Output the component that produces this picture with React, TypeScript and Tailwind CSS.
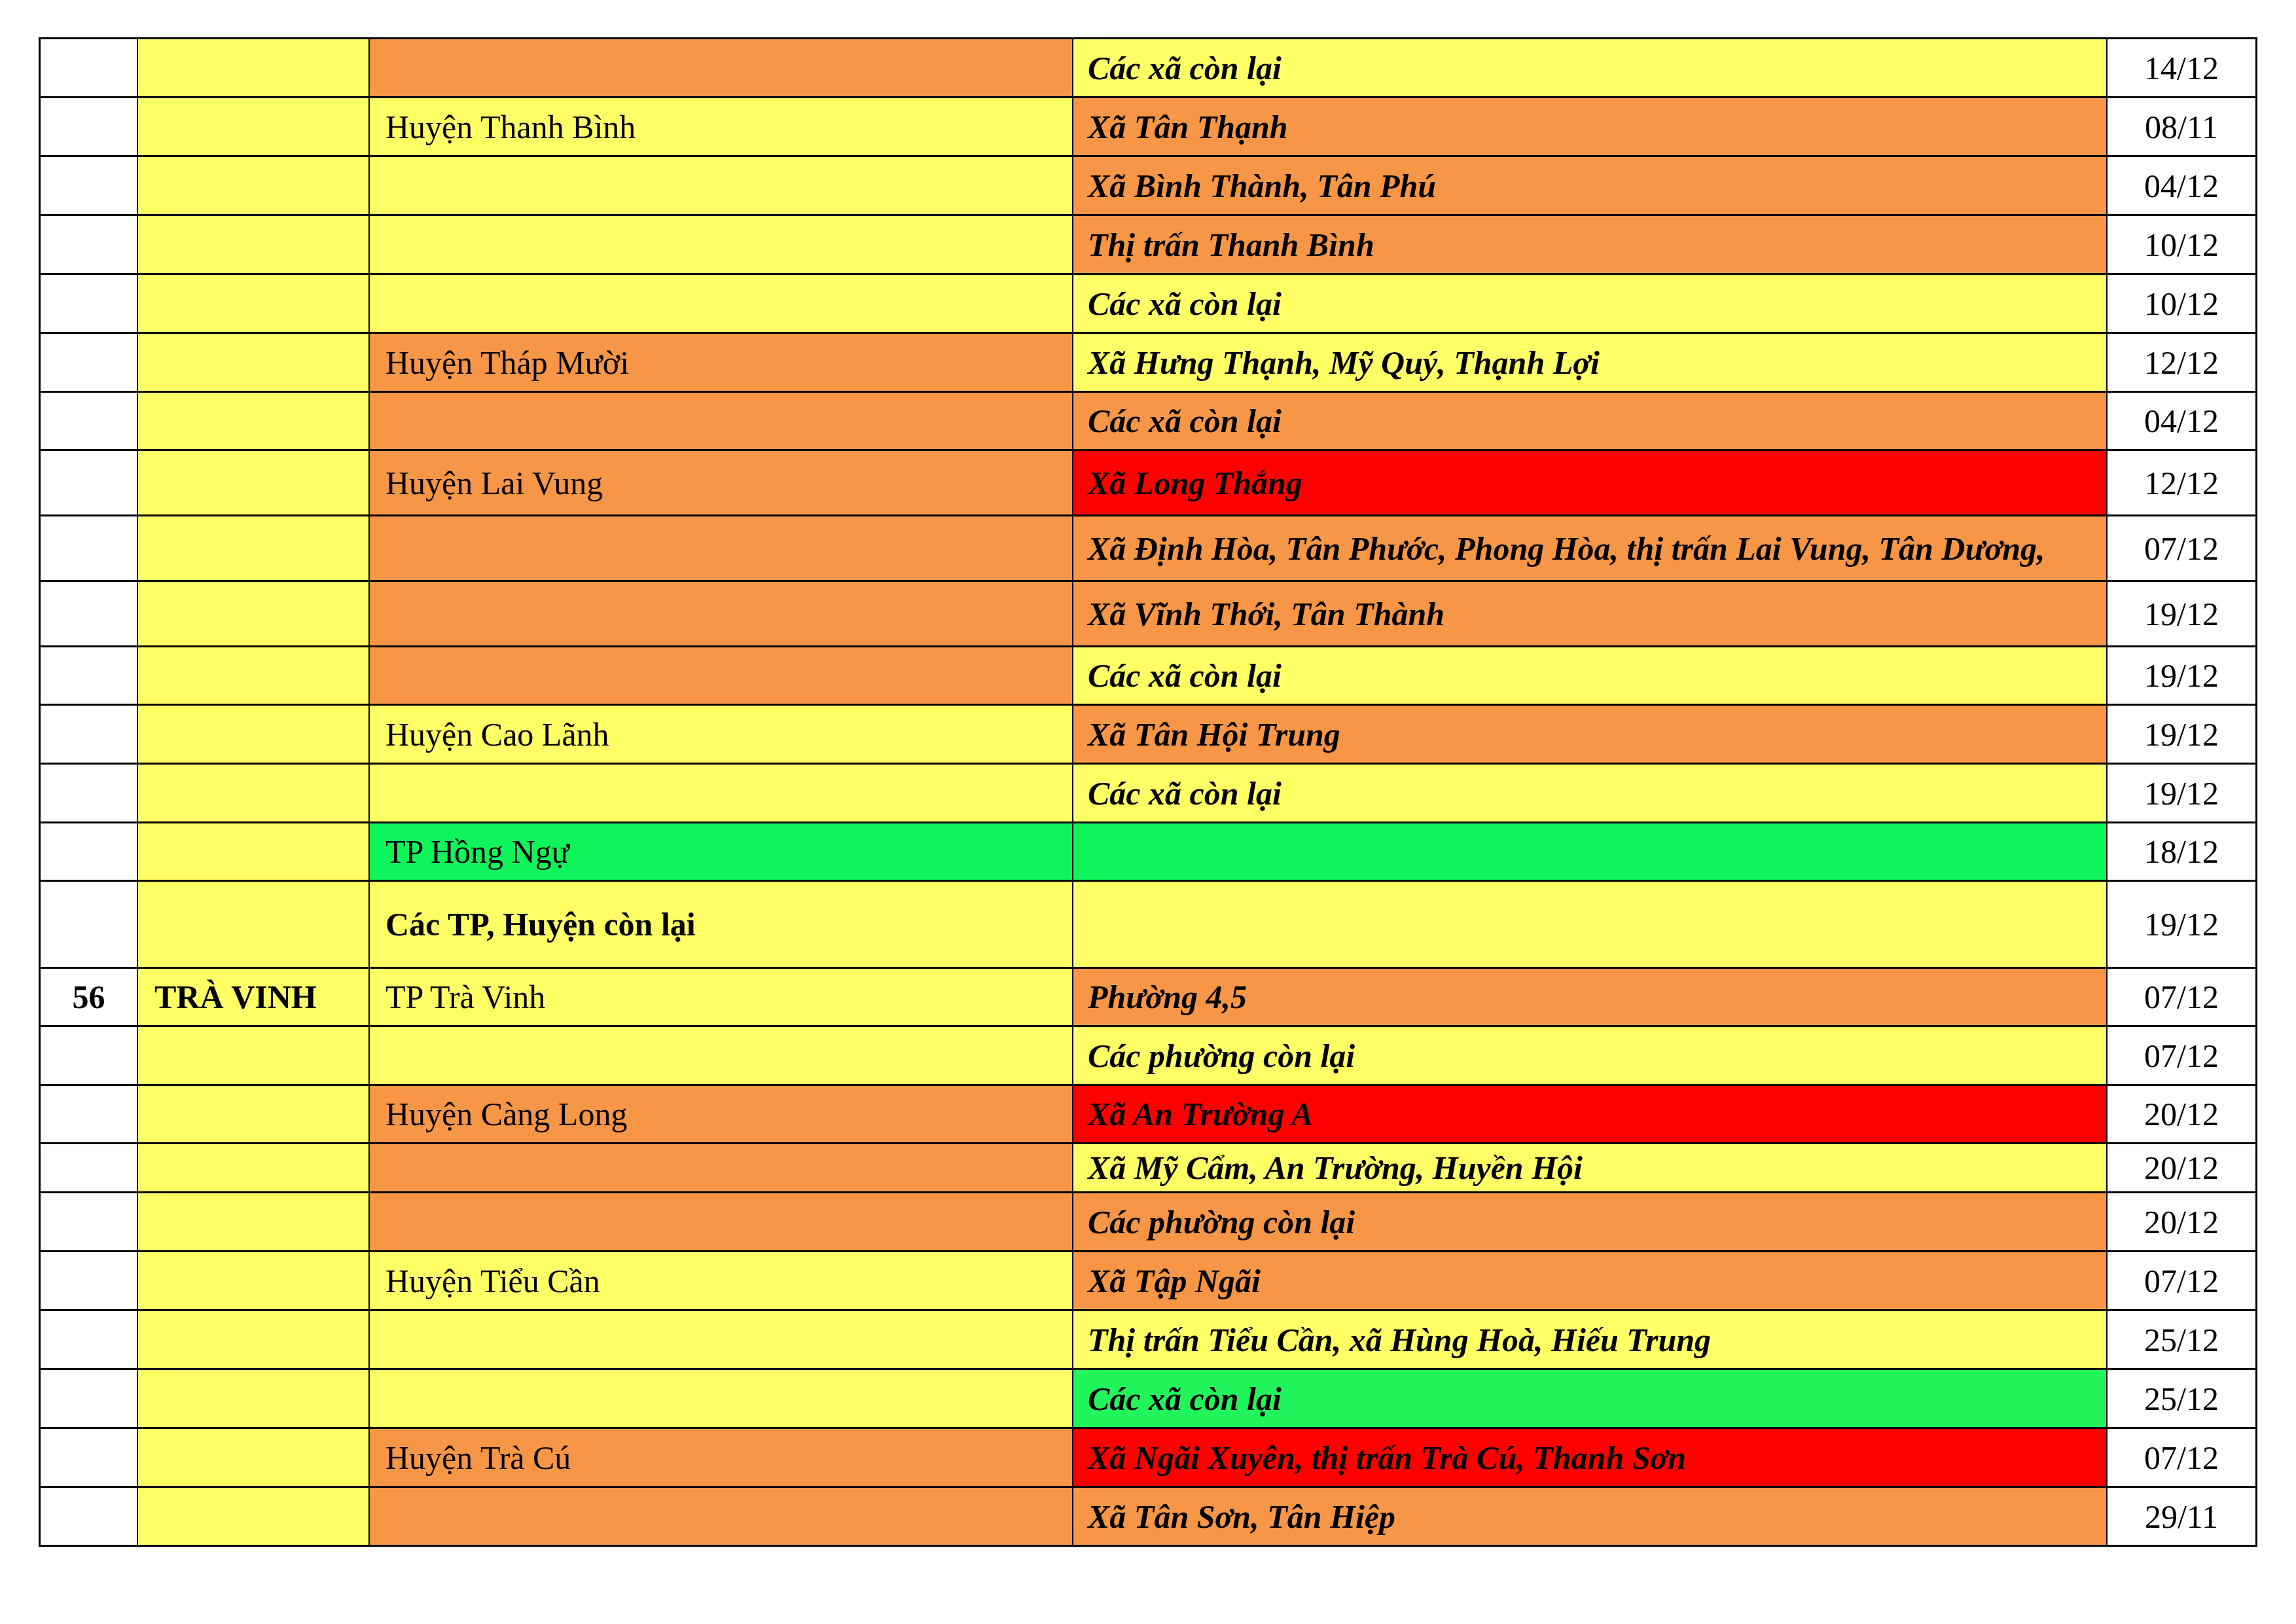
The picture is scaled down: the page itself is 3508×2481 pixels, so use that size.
type Fill = 'y' | 'o' | 'r' | 'g' | 'g2' | 'w'

type Row = {
    h: string
    no?: string
    province?: string
    district: string
    dFill: Fill
    dBold?: boolean
    commune: string
    cFill: Fill
    date: string
}

const fills: Record<Fill, string> = {
    y: 'bg-[#ffff66]',
    o: 'bg-[#f79646]',
    r: 'bg-[#ff0000]',
    g: 'bg-[#0ef55c]',
    g2: 'bg-[#22f55c]',
    w: 'bg-white',
}

const rows: Row[] = [
    { h: 'h-[90px]', district: '', dFill: 'o', commune: 'Các xã còn lại', cFill: 'y', date: '14/12' },
    { h: 'h-[90px]', district: 'Huyện Thanh Bình', dFill: 'y', commune: 'Xã Tân Thạnh', cFill: 'o', date: '08/11' },
    { h: 'h-[90px]', district: '', dFill: 'y', commune: 'Xã Bình Thành, Tân Phú', cFill: 'o', date: '04/12' },
    { h: 'h-[90px]', district: '', dFill: 'y', commune: 'Thị trấn Thanh Bình', cFill: 'o', date: '10/12' },
    { h: 'h-[90px]', district: '', dFill: 'y', commune: 'Các xã còn lại', cFill: 'y', date: '10/12' },
    { h: 'h-[90px]', district: 'Huyện Tháp Mười', dFill: 'o', commune: 'Xã Hưng Thạnh, Mỹ Quý, Thạnh Lợi', cFill: 'y', date: '12/12' },
    { h: 'h-[89px]', district: '', dFill: 'o', commune: 'Các xã còn lại', cFill: 'o', date: '04/12' },
    { h: 'h-[100px]', district: 'Huyện Lai Vung', dFill: 'o', commune: 'Xã Long Thắng', cFill: 'r', date: '12/12' },
    { h: 'h-[100px]', district: '', dFill: 'o', commune: 'Xã Định Hòa, Tân Phước, Phong Hòa, thị trấn Lai Vung, Tân Dương,', cFill: 'o', date: '07/12' },
    { h: 'h-[100px]', district: '', dFill: 'o', commune: 'Xã Vĩnh Thới, Tân Thành', cFill: 'o', date: '19/12' },
    { h: 'h-[89px]', district: '', dFill: 'o', commune: 'Các xã còn lại', cFill: 'y', date: '19/12' },
    { h: 'h-[90px]', district: 'Huyện Cao Lãnh', dFill: 'y', commune: 'Xã Tân Hội Trung', cFill: 'o', date: '19/12' },
    { h: 'h-[90px]', district: '', dFill: 'y', commune: 'Các xã còn lại', cFill: 'y', date: '19/12' },
    { h: 'h-[89px]', district: 'TP Hồng Ngự', dFill: 'g', commune: '', cFill: 'g', date: '18/12' },
    { h: 'h-[133px]', district: 'Các TP, Huyện còn lại', dFill: 'y', dBold: true, commune: '', cFill: 'y', date: '19/12' },
    { h: 'h-[89px]', no: '56', province: 'TRÀ VINH', district: 'TP Trà Vinh', dFill: 'y', commune: 'Phường 4,5', cFill: 'o', date: '07/12' },
    { h: 'h-[90px]', district: '', dFill: 'y', commune: 'Các phường còn lại', cFill: 'y', date: '07/12' },
    { h: 'h-[89px]', district: 'Huyện Càng Long', dFill: 'o', commune: 'Xã An Trường A', cFill: 'r', date: '20/12' },
    { h: 'h-[75px]', district: '', dFill: 'o', commune: 'Xã Mỹ Cẩm, An Trường, Huyền Hội', cFill: 'y', date: '20/12' },
    { h: 'h-[90px]', district: '', dFill: 'o', commune: 'Các phường còn lại', cFill: 'o', date: '20/12' },
    { h: 'h-[90px]', district: 'Huyện Tiểu Cần', dFill: 'y', commune: 'Xã Tập Ngãi', cFill: 'o', date: '07/12' },
    { h: 'h-[90px]', district: '', dFill: 'y', commune: 'Thị trấn Tiểu Cần, xã Hùng Hoà, Hiếu Trung', cFill: 'y', date: '25/12' },
    { h: 'h-[90px]', district: '', dFill: 'y', commune: 'Các xã còn lại', cFill: 'g2', date: '25/12' },
    { h: 'h-[90px]', district: 'Huyện Trà Cú', dFill: 'o', commune: 'Xã Ngãi Xuyên, thị trấn Trà Cú, Thanh Sơn', cFill: 'r', date: '07/12' },
    { h: 'h-[90px]', district: '', dFill: 'o', commune: 'Xã Tân Sơn, Tân Hiệp', cFill: 'o', date: '29/11' },
]

export default function App() {
    return (
        <div className="w-[3508px] h-[2481px] bg-white text-black text-[50px] leading-none font-['Liberation_Serif','Times_New_Roman',serif]">
            <div className="ml-[59px] pt-[57px]">
                <div className="w-[3390px] border-t-[3px] border-x-[3px] border-black">
                    {rows.map((r, i) => (
                        <div
                            key={i}
                            className={`${r.h} grid grid-cols-[147px_354px_1075px_1580px_228px] border-b-[3px] border-black`}
                        >
                            <div className="bg-white flex items-center justify-center font-bold">{r.no}</div>
                            <div className="bg-[#ffff66] border-l-2 border-black flex items-center pl-[25px] font-bold whitespace-nowrap">
                                {r.province}
                            </div>
                            <div
                                className={`${fills[r.dFill]} border-l-2 border-black flex items-center pl-[24px] whitespace-nowrap ${r.dBold ? 'font-bold' : ''}`}
                            >
                                {r.district}
                            </div>
                            <div
                                className={`${fills[r.cFill]} border-l-2 border-black flex items-center pl-[22px] font-bold italic whitespace-nowrap`}
                            >
                                {r.commune}
                            </div>
                            <div className="bg-white border-l-2 border-black flex items-center justify-center">{r.date}</div>
                        </div>
                    ))}
                </div>
            </div>
        </div>
    )
}
